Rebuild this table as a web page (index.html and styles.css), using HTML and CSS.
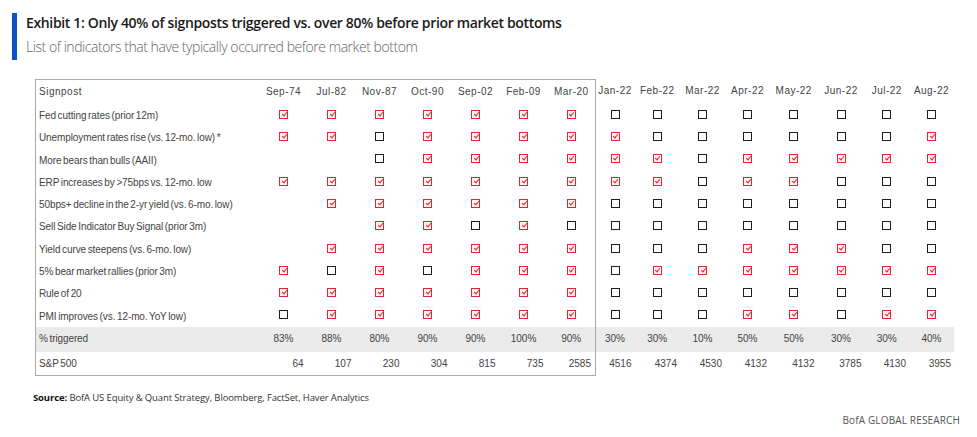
FILE: index.html
```html
<!DOCTYPE html>
<html lang="en">
<head>
<meta charset="utf-8">
<title>Exhibit 1</title>
<link rel="stylesheet" href="styles.css">
</head>
<body>
<header class="exhibit">
  <div class="exhibit-bar"></div>
  <div class="exhibit-text">
    <h1 class="exhibit-title">Exhibit 1: Only 40% of signposts triggered vs. over 80% before prior market bottoms</h1>
    <p class="exhibit-sub">List of indicators that have typically occurred before market bottom</p>
  </div>
</header>

<table class="signposts">
  <colgroup>
    <col class="w-label">
    <col class="w-h"><col class="w-h"><col class="w-h"><col class="w-h"><col class="w-h"><col class="w-h"><col class="w-h">
    <col class="w-r1"><col class="w-r2"><col class="w-r3"><col class="w-r4"><col class="w-r5"><col class="w-r6"><col class="w-r7"><col class="w-r8">
  </colgroup>
  <thead>
    <tr class="head">
      <th class="lbl bl bt">Signpost</th>
      <th class="bt">Sep-74</th><th class="bt">Jul-82</th><th class="bt">Nov-87</th><th class="bt">Oct-90</th><th class="bt">Sep-02</th><th class="bt">Feb-09</th><th class="bt br">Mar-20</th>
      <th>Jan-22</th><th>Feb-22</th><th>Mar-22</th><th>Apr-22</th><th>May-22</th><th>Jun-22</th><th>Jul-22</th><th>Aug-22</th>
    </tr>
  </thead>
  <tbody>
    <tr>
      <td class="lbl bl">Fed cutting rates (prior 12m)</td>
      <td><i class="cb on"></i></td><td><i class="cb on"></i></td><td><i class="cb on"></i></td><td><i class="cb on"></i></td><td><i class="cb on"></i></td><td><i class="cb on"></i></td><td class="br"><i class="cb on"></i></td>
      <td><i class="cb"></i></td><td><i class="cb"></i></td><td><i class="cb"></i></td><td><i class="cb"></i></td><td><i class="cb"></i></td><td><i class="cb"></i></td><td><i class="cb"></i></td><td><i class="cb"></i></td>
    </tr>
    <tr>
      <td class="lbl bl">Unemployment rates rise (vs. 12-mo. low) *</td>
      <td><i class="cb on"></i></td><td><i class="cb on"></i></td><td><i class="cb"></i></td><td><i class="cb on"></i></td><td><i class="cb on"></i></td><td><i class="cb on"></i></td><td class="br"><i class="cb on"></i></td>
      <td><i class="cb on"></i></td><td><i class="cb"></i></td><td><i class="cb"></i></td><td><i class="cb"></i></td><td><i class="cb"></i></td><td><i class="cb"></i></td><td><i class="cb"></i></td><td><i class="cb on"></i></td>
    </tr>
    <tr>
      <td class="lbl bl">More bears than bulls (AAII)</td>
      <td></td><td></td><td><i class="cb"></i></td><td><i class="cb on"></i></td><td><i class="cb on"></i></td><td><i class="cb on"></i></td><td class="br"><i class="cb on"></i></td>
      <td><i class="cb on"></i></td><td><i class="cb on"></i></td><td><i class="cb"></i></td><td><i class="cb on"></i></td><td><i class="cb on"></i></td><td><i class="cb on"></i></td><td><i class="cb on"></i></td><td><i class="cb on"></i></td>
    </tr>
    <tr>
      <td class="lbl bl">ERP increases by &gt;75bps vs. 12-mo. low</td>
      <td><i class="cb on"></i></td><td><i class="cb on"></i></td><td><i class="cb on"></i></td><td><i class="cb on"></i></td><td><i class="cb on"></i></td><td><i class="cb on"></i></td><td class="br"><i class="cb on"></i></td>
      <td><i class="cb on"></i></td><td><i class="cb on"></i></td><td><i class="cb"></i></td><td><i class="cb on"></i></td><td><i class="cb on"></i></td><td><i class="cb"></i></td><td><i class="cb"></i></td><td><i class="cb"></i></td>
    </tr>
    <tr>
      <td class="lbl bl">50bps+ decline in the 2-yr yield (vs. 6-mo. low)</td>
      <td></td><td><i class="cb on"></i></td><td><i class="cb on"></i></td><td><i class="cb on"></i></td><td><i class="cb on"></i></td><td><i class="cb on"></i></td><td class="br"><i class="cb on"></i></td>
      <td><i class="cb"></i></td><td><i class="cb"></i></td><td><i class="cb"></i></td><td><i class="cb"></i></td><td><i class="cb"></i></td><td><i class="cb"></i></td><td><i class="cb"></i></td><td><i class="cb"></i></td>
    </tr>
    <tr>
      <td class="lbl bl">Sell Side Indicator Buy Signal (prior 3m)</td>
      <td></td><td></td><td><i class="cb on"></i></td><td><i class="cb on"></i></td><td><i class="cb"></i></td><td><i class="cb on"></i></td><td class="br"><i class="cb"></i></td>
      <td><i class="cb"></i></td><td><i class="cb"></i></td><td><i class="cb"></i></td><td><i class="cb"></i></td><td><i class="cb"></i></td><td><i class="cb"></i></td><td><i class="cb"></i></td><td><i class="cb"></i></td>
    </tr>
    <tr>
      <td class="lbl bl">Yield curve steepens (vs. 6-mo. low)</td>
      <td></td><td><i class="cb on"></i></td><td><i class="cb on"></i></td><td><i class="cb on"></i></td><td><i class="cb on"></i></td><td><i class="cb on"></i></td><td class="br"><i class="cb on"></i></td>
      <td><i class="cb"></i></td><td><i class="cb"></i></td><td><i class="cb"></i></td><td><i class="cb on"></i></td><td><i class="cb on"></i></td><td><i class="cb on"></i></td><td><i class="cb"></i></td><td><i class="cb"></i></td>
    </tr>
    <tr>
      <td class="lbl bl">5% bear market rallies (prior 3m)</td>
      <td><i class="cb on"></i></td><td><i class="cb"></i></td><td><i class="cb on"></i></td><td><i class="cb"></i></td><td><i class="cb on"></i></td><td><i class="cb on"></i></td><td class="br"><i class="cb on"></i></td>
      <td><i class="cb"></i></td><td><i class="cb on"></i></td><td><i class="cb on"></i></td><td><i class="cb on"></i></td><td><i class="cb on"></i></td><td><i class="cb on"></i></td><td><i class="cb on"></i></td><td><i class="cb on"></i></td>
    </tr>
    <tr>
      <td class="lbl bl">Rule of 20</td>
      <td><i class="cb on"></i></td><td><i class="cb on"></i></td><td><i class="cb on"></i></td><td><i class="cb on"></i></td><td><i class="cb on"></i></td><td><i class="cb on"></i></td><td class="br"><i class="cb on"></i></td>
      <td><i class="cb"></i></td><td><i class="cb"></i></td><td><i class="cb"></i></td><td><i class="cb"></i></td><td><i class="cb"></i></td><td><i class="cb"></i></td><td><i class="cb"></i></td><td><i class="cb"></i></td>
    </tr>
    <tr>
      <td class="lbl bl">PMI improves (vs. 12-mo. YoY low)</td>
      <td><i class="cb"></i></td><td><i class="cb on"></i></td><td><i class="cb on"></i></td><td><i class="cb on"></i></td><td><i class="cb on"></i></td><td><i class="cb on"></i></td><td class="br"><i class="cb on"></i></td>
      <td><i class="cb"></i></td><td><i class="cb"></i></td><td><i class="cb"></i></td><td><i class="cb on"></i></td><td><i class="cb on"></i></td><td><i class="cb"></i></td><td><i class="cb on"></i></td><td><i class="cb on"></i></td>
    </tr>
    <tr class="pct">
      <td class="lbl bl">% triggered</td>
      <td>83%</td><td>88%</td><td>80%</td><td>90%</td><td>90%</td><td>100%</td><td class="br">90%</td>
      <td>30%</td><td>30%</td><td>10%</td><td>50%</td><td>50%</td><td>30%</td><td>30%</td><td>40%</td>
    </tr>
    <tr class="spx">
      <td class="lbl bl bb">S&amp;P 500</td>
      <td class="bb">64</td><td class="bb">107</td><td class="bb">230</td><td class="bb">304</td><td class="bb">815</td><td class="bb">735</td><td class="bb br">2585</td>
      <td class="r">4516</td><td class="r">4374</td><td class="r">4530</td><td class="r">4132</td><td class="r">4132</td><td class="r">3785</td><td class="r">4130</td><td class="r">3955</td>
    </tr>
  </tbody>
</table>

<footer class="foot">
  <p class="source"><b>Source:</b> BofA US Equity &amp; Quant Strategy, Bloomberg, FactSet, Haver Analytics</p>
  <p class="brand">BofA GLOBAL RESEARCH</p>
</footer>
</body>
</html>
```

FILE: styles.css
```css
html, body {
  margin: 0;
  padding: 0;
  background: #ffffff;
}

body {
  width: 977px;
  height: 437px;
  overflow: hidden;
  font-family: "Liberation Sans", Arial, sans-serif;
  color: #333333;
}

/* ---------- header ---------- */
.exhibit {
  display: flex;
  gap: 9px;
  margin: 13px 0 0 12px;
}

.exhibit-bar {
  width: 5px;
  height: 47px;
  background: #0b52c5;
  flex: none;
}

.exhibit-title {
  margin: 0;
  font-family: "Open Sans", "Liberation Sans", sans-serif;
  font-weight: 600;
  font-size: 14px;
  line-height: 20px;
  letter-spacing: -0.35px;
  color: #1a1a1a;
}

.exhibit-sub {
  margin: 4px 0 0 0;
  font-family: "Open Sans", "Liberation Sans", sans-serif;
  font-weight: 300;
  font-size: 14px;
  line-height: 20px;
  letter-spacing: -0.45px;
  color: #666666;
}

/* ---------- table ---------- */
.signposts {
  margin: 19px 0 0 35px;
  border-collapse: collapse;
  table-layout: fixed;
  width: 919px;
  font-size: 10px;
  color: #444444;
}

.w-label { width: 224px; }
.w-h { width: 48px; }
.w-r1 { width: 39px; }
.w-r2 { width: 45.5px; }
.w-r3 { width: 45px; }
.w-r4 { width: 45px; }
.w-r5 { width: 47.5px; }
.w-r6 { width: 47px; }
.w-r7 { width: 44.5px; }
.w-r8 { width: 45px; }

.signposts th,
.signposts td {
  padding: 0;
  height: 22.3px;
  text-align: center;
  vertical-align: middle;
  font-weight: normal;
  white-space: nowrap;
}

.signposts .head th {
  letter-spacing: 0.5px;
  padding-bottom: 2px;
}

.signposts .lbl {
  text-align: left;
  padding-left: 3px;
  word-spacing: -1px;
  letter-spacing: -0.1px;
}

.bl { border-left: 1px solid #a9a9a9; }
.br { border-right: 1px solid #a9a9a9; }
.bt { border-top: 1px solid #a9a9a9; }
.bb { border-bottom: 1px solid #a9a9a9; }

.pct td {
  background: #ebebeb;
  padding-bottom: 2px;
}

.spx td {
  text-align: right;
  padding-right: 4px;
  padding-top: 1px;
}

.spx td.lbl {
  text-align: left;
}

.spx td.r {
  padding-right: 3px;
}

/* checkboxes */
.cb {
  display: inline-block;
  position: relative;
  top: -2px;
  width: 9px;
  height: 9px;
  box-sizing: border-box;
  border: 1px solid #1e1e1e;
  vertical-align: middle;
}

.cb.on {
  border-color: #e0262e;
  background: #fff4f4;
}

.cb.on::after {
  content: "";
  position: absolute;
  left: 2.5px;
  top: 0px;
  width: 2px;
  height: 4px;
  border: solid #e0262e;
  border-width: 0 1px 1px 0;
  transform: rotate(40deg);
}

/* ---------- footer ---------- */
.foot {
  margin: 0;
  font-family: "Open Sans", "Liberation Sans", sans-serif;
  font-size: 10px;
}

.source {
  margin: 15px 0 0 33px;
  line-height: 14px;
  font-size: 9.5px;
  letter-spacing: -0.12px;
  color: #333333;
}

.source b {
  font-weight: 700;
  color: #111111;
}

.brand {
  margin: 8px 17px 0 0;
  text-align: right;
  line-height: 14px;
  font-size: 10px;
  color: #555555;
  letter-spacing: 0.15px;
}
```
